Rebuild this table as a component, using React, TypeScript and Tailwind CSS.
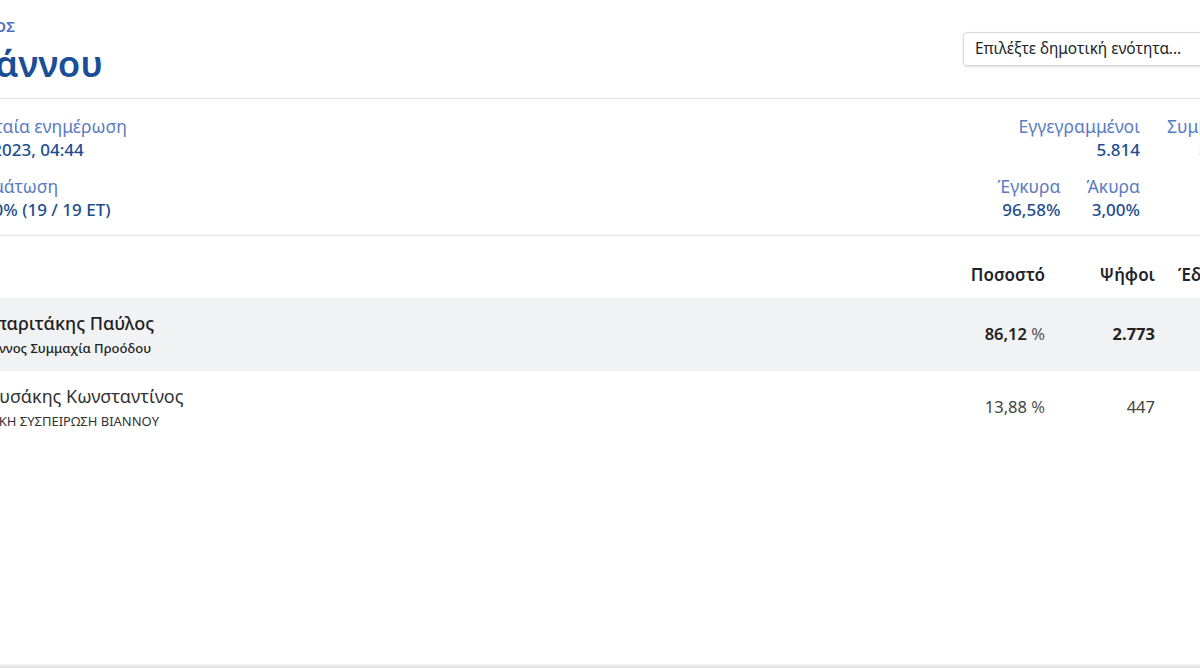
const LABEL = "text-[17.5px] leading-[24px] text-[#5a7cc3]";
const VALUE = "text-[17px] leading-[24px] font-medium text-[#1d4e8f]";

const CANDIDATES = [
    { name: "Μπαριτάκης Παύλος", party: "Βιάννος Συμμαχία Προόδου", pct: "86,12", votes: "2.773", seats: "12", leader: true },
    { name: "Χρυσάκης Κωνσταντίνος", party: "ΛΑΪΚΗ ΣΥΣΠΕΙΡΩΣΗ ΒΙΑΝΝΟΥ", pct: "13,88", votes: "447", seats: "1", leader: false },
];

function Stat({ label, value }: { label: string; value: string }) {
    return (
        <div className="inline-flex flex-col items-end">
            <span className={LABEL}>{label}</span>
            <span className={VALUE}>{value}</span>
        </div>
    );
}

export default function App() {
    return (
        <div className="flex h-[668px] w-full flex-col overflow-hidden bg-white font-['Noto_Sans',sans-serif] text-[#212529]">
            <div className="flex-1">
                <div className="ml-[-50px] w-[1338px]">
                    <header className="flex h-[99px] items-start justify-between border-b border-[#e4e4e4]">
                        <div className="ml-[8px] pt-[17px]">
                            <p className="text-[15px] font-semibold leading-[18px] tracking-wide text-[#4b6fc3]">ΔΗΜΟΣ</p>
                            <h1 className="mt-[5px] text-[36.5px] font-semibold leading-[46px] text-[#1a4f98]">Βιάννου</h1>
                        </div>
                        <div className="mr-[45px] mt-[32px] flex h-[34px] w-[280px] items-center rounded-[4px] border border-[#d8d8d8] px-[11px] text-[15.4px] text-[#212529] shadow-sm">
                            Επιλέξτε δημοτική ενότητα...
                        </div>
                    </header>

                    <section className="flex h-[137px] flex-col gap-[12px] border-b border-[#e4e4e4] pt-[15px]">
                        <div className="flex items-start justify-between">
                            <div className="flex flex-col">
                                <span className={LABEL}>Τελευταία ενημέρωση</span>
                                <span className={VALUE}>9/10/2023, 04:44</span>
                            </div>
                            <div className="flex gap-[27px]">
                                <Stat label="Εγγεγραμμένοι" value="5.814" />
                                <div className="w-[121px]">
                                    <Stat label="Συμμετοχή" value="52,19%" />
                                </div>
                            </div>
                        </div>
                        <div className="flex items-start justify-between">
                            <div className="flex flex-col">
                                <span className={LABEL}>Ενσωμάτωση</span>
                                <span className={VALUE}>100,00% (19 / 19 ΕΤ)</span>
                            </div>
                            <div className="mr-[148px] flex gap-[26px]">
                                <Stat label="Έγκυρα" value="96,58%" />
                                <Stat label="Άκυρα" value="3,00%" />
                            </div>
                        </div>
                    </section>

                    <div className="grid grid-cols-[1fr_120px_110px_133px] items-center pb-[11px] pt-[27px] text-[17px] font-semibold leading-[24px]">
                        <span />
                        <span className="text-right">Ποσοστό</span>
                        <span className="text-right">Ψήφοι</span>
                        <span className="pl-[23px]">Έδρες</span>
                    </div>

                    {CANDIDATES.map((c) => (
                        <div
                            key={c.name}
                            className={`grid h-[73px] grid-cols-[1fr_120px_110px_133px] items-center ${c.leader ? "bg-[#f1f2f4]" : ""}`}
                        >
                            <div className="flex flex-col gap-[3px] pl-[28px]">
                                <span className={`text-[18px] leading-[24px] ${c.leader ? "font-medium text-[#1f1f1f]" : "text-[#333]"}`}>{c.name}</span>
                                <span className={`text-[13px] leading-[20px] ${c.leader ? "font-medium text-[#222]" : "text-[#333]"}`}>{c.party}</span>
                            </div>
                            <span className={`text-right text-[16.5px] ${c.leader ? "font-semibold text-[#222]" : "text-[#444]"}`}>
                                {c.pct} <span className="font-normal text-[#555]">%</span>
                            </span>
                            <span className={`text-right text-[16.5px] ${c.leader ? "font-bold text-[#222]" : "text-[#444]"}`}>{c.votes}</span>
                            <span className={`pl-[23px] text-center text-[16.5px] ${c.leader ? "font-bold" : ""}`}>{c.seats}</span>
                        </div>
                    ))}
                </div>
            </div>
            <footer className="h-[4px] border-t-2 border-[#efefef] bg-[#e3e3e3]" />
        </div>
    );
}
